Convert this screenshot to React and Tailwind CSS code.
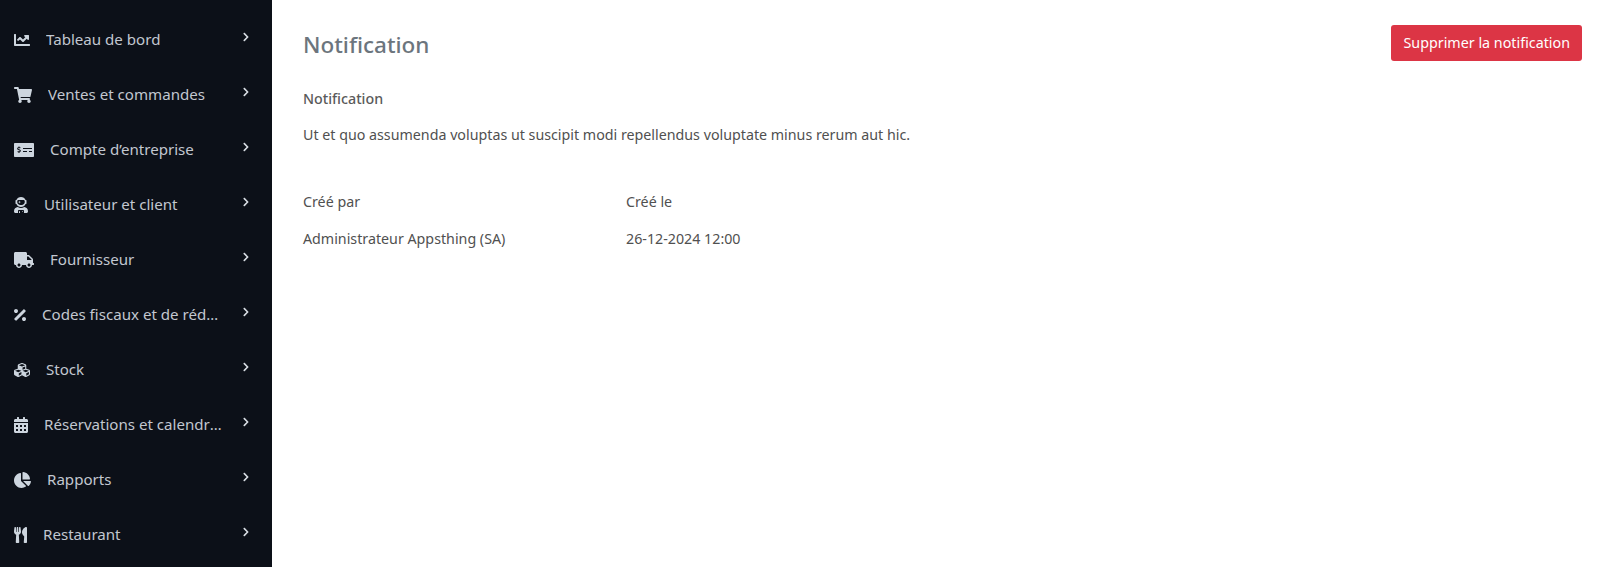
import { FaChartLine, FaShoppingCart, FaMoneyCheckAlt, FaUserAstronaut, FaTruck, FaPercentage, FaCubes, FaCalendarAlt, FaChartPie, FaUtensils, FaChevronRight } from 'react-icons/fa'

const menu = [
  { label: 'Tableau de bord', icon: FaChartLine, size: 'w-4 h-4' },
  { label: 'Ventes et commandes', icon: FaShoppingCart, size: 'w-[18px] h-[18px]' },
  { label: "Compte d’entreprise", icon: FaMoneyCheckAlt, size: 'w-5 h-5' },
  { label: 'Utilisateur et client', icon: FaUserAstronaut, size: 'w-[14px] h-4' },
  { label: 'Fournisseur', icon: FaTruck, size: 'w-5 h-5' },
  { label: 'Codes fiscaux et de réductions', icon: FaPercentage, size: 'w-3 h-4' },
  { label: 'Stock', icon: FaCubes, size: 'w-4 h-4' },
  { label: 'Réservations et calendrier', icon: FaCalendarAlt, size: 'w-[14px] h-4' },
  { label: 'Rapports', icon: FaChartPie, size: 'w-[17px] h-[18px]' },
  { label: 'Restaurant', icon: FaUtensils, size: 'w-[13px] h-4' },
]

export default function App() {
  return (
    <div className="flex h-[567px] overflow-hidden bg-white font-['Noto_Sans',sans-serif]">
      <aside className="w-[272px] shrink-0 bg-[#0c1018] pt-3">
        {menu.map(item => {
          const Icon = item.icon
          return (
            <div key={item.label} className="flex items-center h-[55px] pl-[14px] pr-[21px] text-[#c2c7d0]">
              <Icon className={`${item.size} mr-4 shrink-0 text-[#cdd5de]`} />
              <span className="w-[180px] truncate text-[15.1px] leading-[20px] -mt-px">{item.label}</span>
              <FaChevronRight className="w-[10px] h-[10px] ml-auto -mt-[6px] shrink-0 text-[#d8dde3]" />
            </div>
          )
        })}
      </aside>

      <main className="flex-1 pl-[31px] pr-[18px] pt-[25px] text-[#505050] text-[14.25px]">
        <div className="flex justify-between items-start">
          <h1 className="text-[22.5px] leading-[40px] font-medium text-[#6c757d]">Notification</h1>
          <button className="h-[36px] px-3 rounded-[3px] bg-[#dc3545] text-white text-[14.3px]">Supprimer la notification</button>
        </div>

        <p className="mt-[24px] font-medium leading-[20px] text-[#5a5a5a]">Notification</p>
        <p className="mt-4 leading-[20px]">Ut et quo assumenda voluptas ut suscipit modi repellendus voluptate minus rerum aut hic.</p>

        <div className="grid grid-cols-[323px_1fr] gap-y-[17px] mt-[47px] leading-[20px]">
          <span>Créé par</span>
          <span>Créé le</span>
          <span>Administrateur Appsthing (SA)</span>
          <span>26-12-2024 12:00</span>
        </div>
      </main>
    </div>
  )
}
